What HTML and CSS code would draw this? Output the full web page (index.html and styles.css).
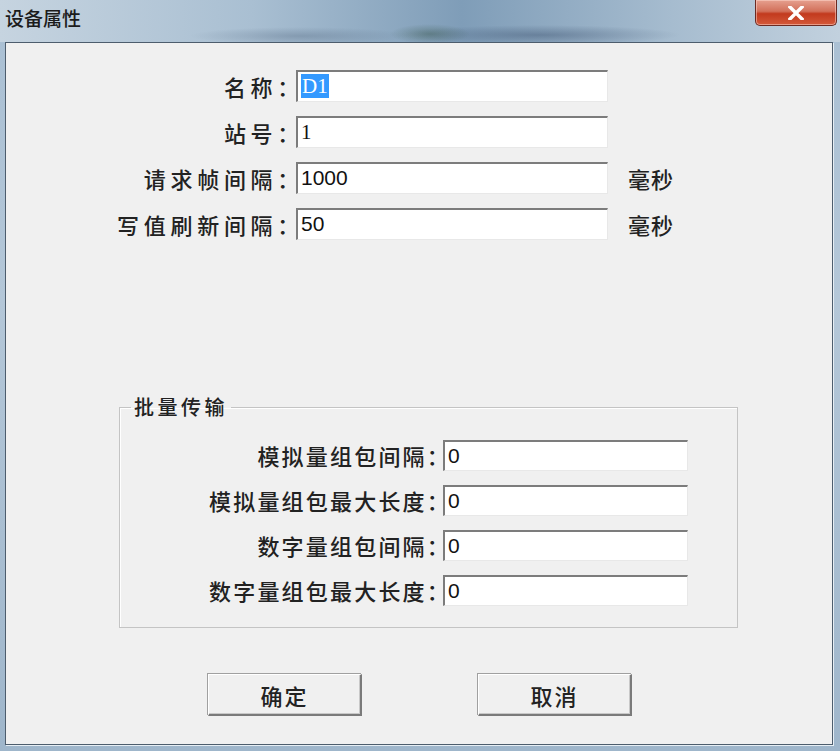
FILE: index.html
```html
<!DOCTYPE html>
<html lang="zh-CN">
  <head>
    <meta charset="UTF-8" />
    <meta name="viewport" content="width=device-width, initial-scale=1.0" />
    <title>设备属性</title>
    <link rel="stylesheet" href="styles.css">
  </head>
  <body>
    <div class="window">
      <div class="titlebar">
        <span class="title">设备属性</span>
        <button class="close-btn" title="关闭">
          <svg width="16" height="14" viewBox="0 0 16 14">
            <path d="M2 1 L14 13 M14 1 L2 13" stroke="#ffffff" stroke-width="3.4" stroke-linecap="square" />
          </svg>
        </button>
      </div>

      <div class="client">
        <div class="form-grid">
          <label class="field-label">名称：</label>
          <div class="edit"><span class="selected">D1</span></div>
          <span></span>

          <label class="field-label">站号：</label>
          <div class="edit serif">1</div>
          <span></span>

          <label class="field-label">请求帧间隔：</label>
          <div class="edit">1000</div>
          <span class="unit">毫秒</span>

          <label class="field-label">写值刷新间隔：</label>
          <div class="edit">50</div>
          <span class="unit">毫秒</span>
        </div>

        <fieldset class="group">
          <legend>批量传输</legend>
          <div class="group-grid">
            <label class="field-label">模拟量组包间隔：</label>
            <div class="edit small">0</div>

            <label class="field-label">模拟量组包最大长度：</label>
            <div class="edit small">0</div>

            <label class="field-label">数字量组包间隔：</label>
            <div class="edit small">0</div>

            <label class="field-label">数字量组包最大长度：</label>
            <div class="edit small">0</div>
          </div>
        </fieldset>

        <div class="button-row">
          <button class="push">确定</button>
          <button class="push">取消</button>
        </div>
      </div>
    </div>
  </body>
</html>
```

FILE: styles.css
```css
* {
  box-sizing: border-box;
}
body {
  margin: 0;
  width: 840px;
  height: 751px;
  overflow: hidden;
  font-family: "Noto Sans CJK SC", "Liberation Sans", sans-serif;
  color: #222;
}
.window {
  height: 751px;
  display: flex;
  flex-direction: column;
  background: linear-gradient(180deg, #a9bfd3 0%, #b4c7d8 40%, #9fb6cb 100%);
}
.titlebar {
  height: 42px;
  display: flex;
  align-items: flex-start;
  padding-left: 5px;
  background:
    radial-gradient(ellipse 40px 10px at 430px 34px, rgba(60, 90, 80, 0.45), transparent),
    radial-gradient(ellipse 140px 10px at 540px 35px, rgba(50, 70, 100, 0.4), transparent),
    radial-gradient(ellipse 110px 9px at 300px 36px, rgba(80, 100, 125, 0.35), transparent),
    linear-gradient(90deg, #c6d4e0 0%, #a9bfd2 30%, #7f9db8 55%, #a6bccf 80%, #c2d1de 100%);
}
.title {
  font-size: 19px;
  font-weight: 500;
  line-height: 36px;
  color: #1c1c1c;
}
.close-btn {
  margin-left: auto;
  margin-right: 3px;
  width: 82px;
  height: 26px;
  border: 1px solid #6b2a22;
  border-top: none;
  border-radius: 0 0 5px 5px;
  background: linear-gradient(180deg, #e6a08f 0%, #d2705a 45%, #c23a1e 55%, #d4593a 100%);
  display: flex;
  align-items: center;
  justify-content: center;
  padding: 0;
  box-shadow: inset 0 0 0 1px rgba(255, 220, 210, 0.5);
}
.client {
  flex: 1;
  margin: 0 7px 6px 5px;
  background: #f0f0f0;
  border: 1px solid #4d5d6d;
  box-shadow: 1px 1px 0 #e6eef4;
  padding-top: 27px;
}
.form-grid {
  display: grid;
  grid-template-columns: 204px 312px auto;
  column-gap: 6px;
  row-gap: 14px;
  margin-left: 80px;
  align-items: center;
}
.field-label {
  font-size: 22px;
  font-weight: 500;
  letter-spacing: 4.7px;
  font-feature-settings: "halt";
  text-align: right;
  white-space: nowrap;
  margin-right: -3px;
}
.unit {
  font-size: 22px;
  font-weight: 500;
  letter-spacing: 1px;
  margin-left: 14px;
}
.edit {
  height: 32px;
  background: #fff;
  border-top: 2px solid #7c7c7c;
  border-left: 2px solid #7c7c7c;
  border-right: 1px solid #e8e8e8;
  border-bottom: 1px solid #e8e8e8;
  font-family: "Liberation Sans", "DejaVu Sans", sans-serif;
  font-size: 21px;
  line-height: 28px;
  padding-left: 3px;
  color: #111;
}
.edit.serif {
  font-family: "Liberation Serif", serif;
}
.selected {
  font-family: "Liberation Serif", serif;
  background: #3399ff;
  color: #fff;
  padding: 0 1px;
}
.edit.small {
  height: 31px;
  width: 245px;
}
.group {
  margin: 155px 0 0 113px;
  width: 619px;
  height: 233px;
  padding: 0;
  border: 1px solid #c4c4c4;
  box-shadow: inset 1px 1px 0 #ffffff;
}
.group legend {
  font-size: 20px;
  font-weight: 500;
  letter-spacing: 3.5px;
  padding: 0 3px;
  margin-left: 11px;
  line-height: 24px;
}
.group-grid {
  display: grid;
  grid-template-columns: 317px 245px;
  column-gap: 6px;
  row-gap: 13px;
  margin-top: 20px;
  align-items: center;
}
.group-grid .field-label {
  letter-spacing: 2.2px;
  margin-right: -3px;
}
.button-row {
  display: flex;
  gap: 116px;
  margin: 46px 0 0 202px;
}
.push {
  width: 154px;
  height: 42px;
  background: #f0f0f0;
  border-top: 1px solid #ffffff;
  border-left: 1px solid #ffffff;
  border-right: 2px solid #7a7a7a;
  border-bottom: 2px solid #7a7a7a;
  box-shadow: -1px -1px 0 #a0a0a0, inset -1px -1px 0 #c8c8c8;
  font-family: "Noto Sans CJK SC", sans-serif;
  font-size: 22px;
  font-weight: 500;
  letter-spacing: 2px;
  color: #222;
  cursor: pointer;
}
```
